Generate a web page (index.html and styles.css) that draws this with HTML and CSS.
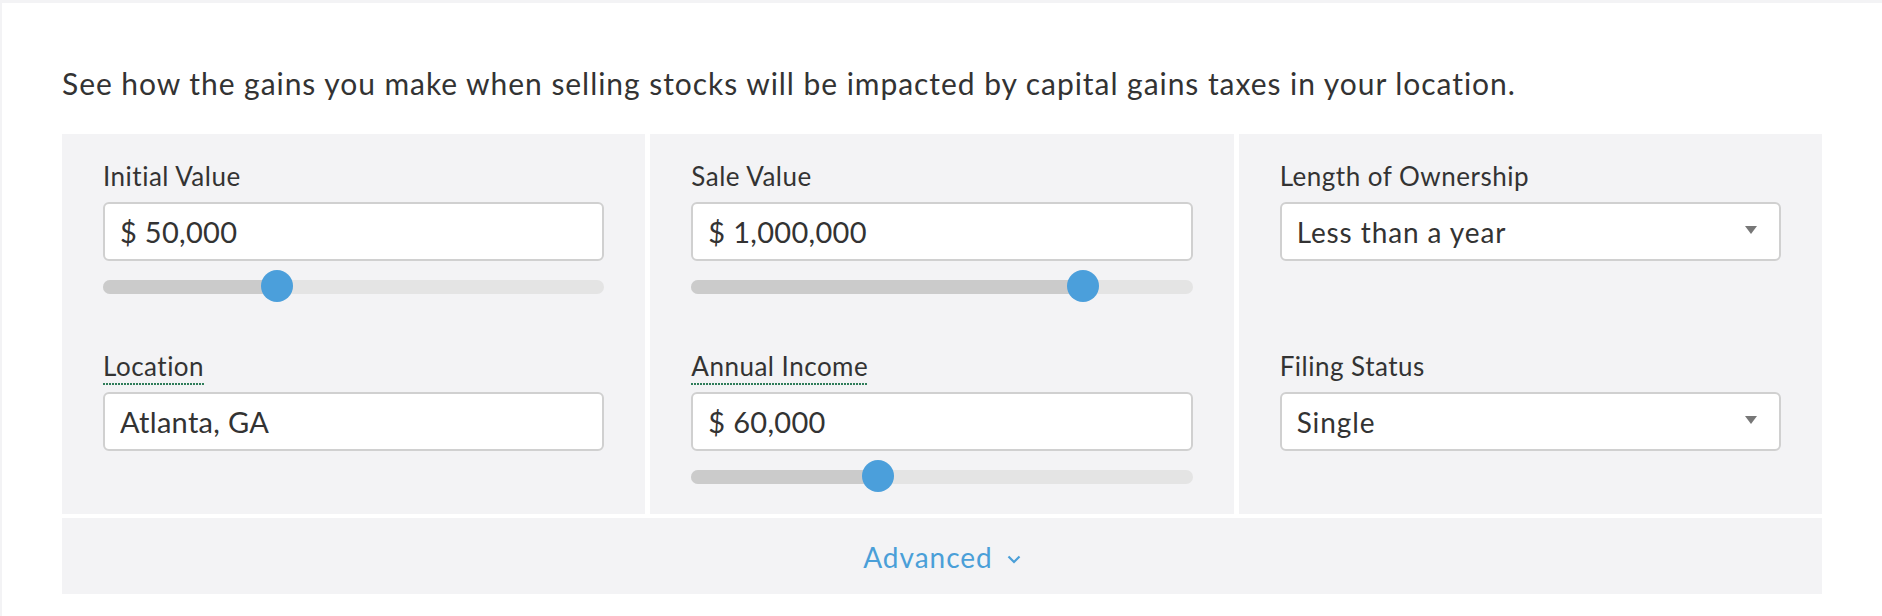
FILE: index.html
```html
<!DOCTYPE html>
<html>
<head>
<title>Capital Gains Tax Calculator</title>
<link rel="stylesheet" href="styles.css">
</head>
<body>
<div class="page">
  <p class="intro">See how the gains you make when selling stocks will be impacted by capital gains taxes in your location.</p>

  <div class="calc">
    <div class="col">
      <div class="field">
        <label class="label">Initial Value</label>
        <input class="box" type="text" value="$ 50,000">
        <div class="slider">
          <div class="track"><div class="fill" style="width: 34.7%"></div></div>
          <span class="thumb" style="left: 34.7%"></span>
        </div>
      </div>
      <div class="field">
        <label class="label"><span class="tip">Location</span></label>
        <input class="box" type="text" value="Atlanta, GA">
      </div>
    </div>

    <div class="col">
      <div class="field">
        <label class="label">Sale Value</label>
        <input class="box" type="text" value="$ 1,000,000">
        <div class="slider">
          <div class="track"><div class="fill" style="width: 78.2%"></div></div>
          <span class="thumb" style="left: 78.2%"></span>
        </div>
      </div>
      <div class="field">
        <label class="label"><span class="tip">Annual Income</span></label>
        <input class="box" type="text" value="$ 60,000">
        <div class="slider">
          <div class="track"><div class="fill" style="width: 37.3%"></div></div>
          <span class="thumb" style="left: 37.3%"></span>
        </div>
      </div>
    </div>

    <div class="col">
      <div class="field">
        <label class="label">Length of Ownership</label>
        <div class="box select">Less than a year<span class="arrow"></span></div>
      </div>
      <div class="field">
        <label class="label">Filing Status</label>
        <div class="box select">Single<span class="arrow"></span></div>
      </div>
    </div>

    <div class="advanced">
      <a href="#" class="adv-link">Advanced<svg class="chev" width="14" height="9" viewBox="0 0 14 9"><polyline points="1.5,1.5 7,7 12.5,1.5" fill="none" stroke="#4a9fd8" stroke-width="2.2"/></svg></a>
    </div>
  </div>
</div>
</body>
</html>
```

FILE: styles.css
```css
html, body {
  margin: 0;
  background-color: #f3f3f5;
}

body {
  font-family: "Lato", "Open Sans", sans-serif;
  color: #333;
}

.page {
  background-color: #fff;
  margin: 3px 0 0 2px;
  padding: 62px 60px 0 60px;
  min-height: 613px;
  box-sizing: border-box;
}

.intro {
  margin: 0 0 33px;
  font-size: 30px;
  line-height: 36px;
  letter-spacing: 0.95px;
  color: #333;
}

.calc {
  display: grid;
  grid-template-columns: 1fr 1fr 1fr;
  column-gap: 5px;
  row-gap: 4px;
}

.col {
  background-color: #f3f3f5;
  padding: 26px 41px 22px;
  display: flex;
  flex-direction: column;
  gap: 48px;
}

.field {
  min-height: 142px;
  display: flex;
  flex-direction: column;
}

.label {
  display: block;
  font-size: 26px;
  line-height: 32px;
  letter-spacing: 0.5px;
  margin-bottom: 10px;
  color: #333;
}

.tip {
  padding-bottom: 3px;
  background-image: linear-gradient(to right, #2f7d5a 60%, transparent 0);
  background-size: 3px 2px;
  background-repeat: repeat-x;
  background-position: left bottom;
}

.box {
  box-sizing: border-box;
  width: 100%;
  height: 59px;
  border: 2px solid #d0d0d0;
  border-radius: 6px;
  background-color: #fff;
  padding: 0 15px;
  font-family: "Lato", "Open Sans", sans-serif;
  font-size: 29px;
  letter-spacing: 0.3px;
  color: #333;
  outline: none;
}

.select {
  display: flex;
  align-items: center;
  justify-content: space-between;
  padding-right: 22px;
  font-size: 28px;
  letter-spacing: 0.9px;
}

.arrow {
  width: 0;
  height: 0;
  border-left: 6px solid transparent;
  border-right: 6px solid transparent;
  border-top: 8px solid #777;
  margin-top: -4px;
}

.slider {
  position: relative;
  height: 32px;
  margin-top: 9px;
}

.track {
  position: absolute;
  left: 0;
  right: 0;
  top: 10px;
  height: 14px;
  border-radius: 7px;
  background-color: #e4e4e4;
  overflow: hidden;
}

.fill {
  height: 100%;
  background-color: #cbcbcb;
}

.thumb {
  position: absolute;
  top: 0;
  width: 32px;
  height: 32px;
  margin-left: -16px;
  border-radius: 50%;
  background-color: #4b9fdb;
}

.advanced {
  grid-column: 1 / 4;
  background-color: #f3f3f5;
  text-align: center;
  padding: 21px 0 14px;
  line-height: 36px;
}

.adv-link {
  color: #4a9fd8;
  text-decoration: none;
  font-size: 28px;
  letter-spacing: 1px;
}

.chev {
  margin-left: 14px;
  vertical-align: 4px;
}
```
